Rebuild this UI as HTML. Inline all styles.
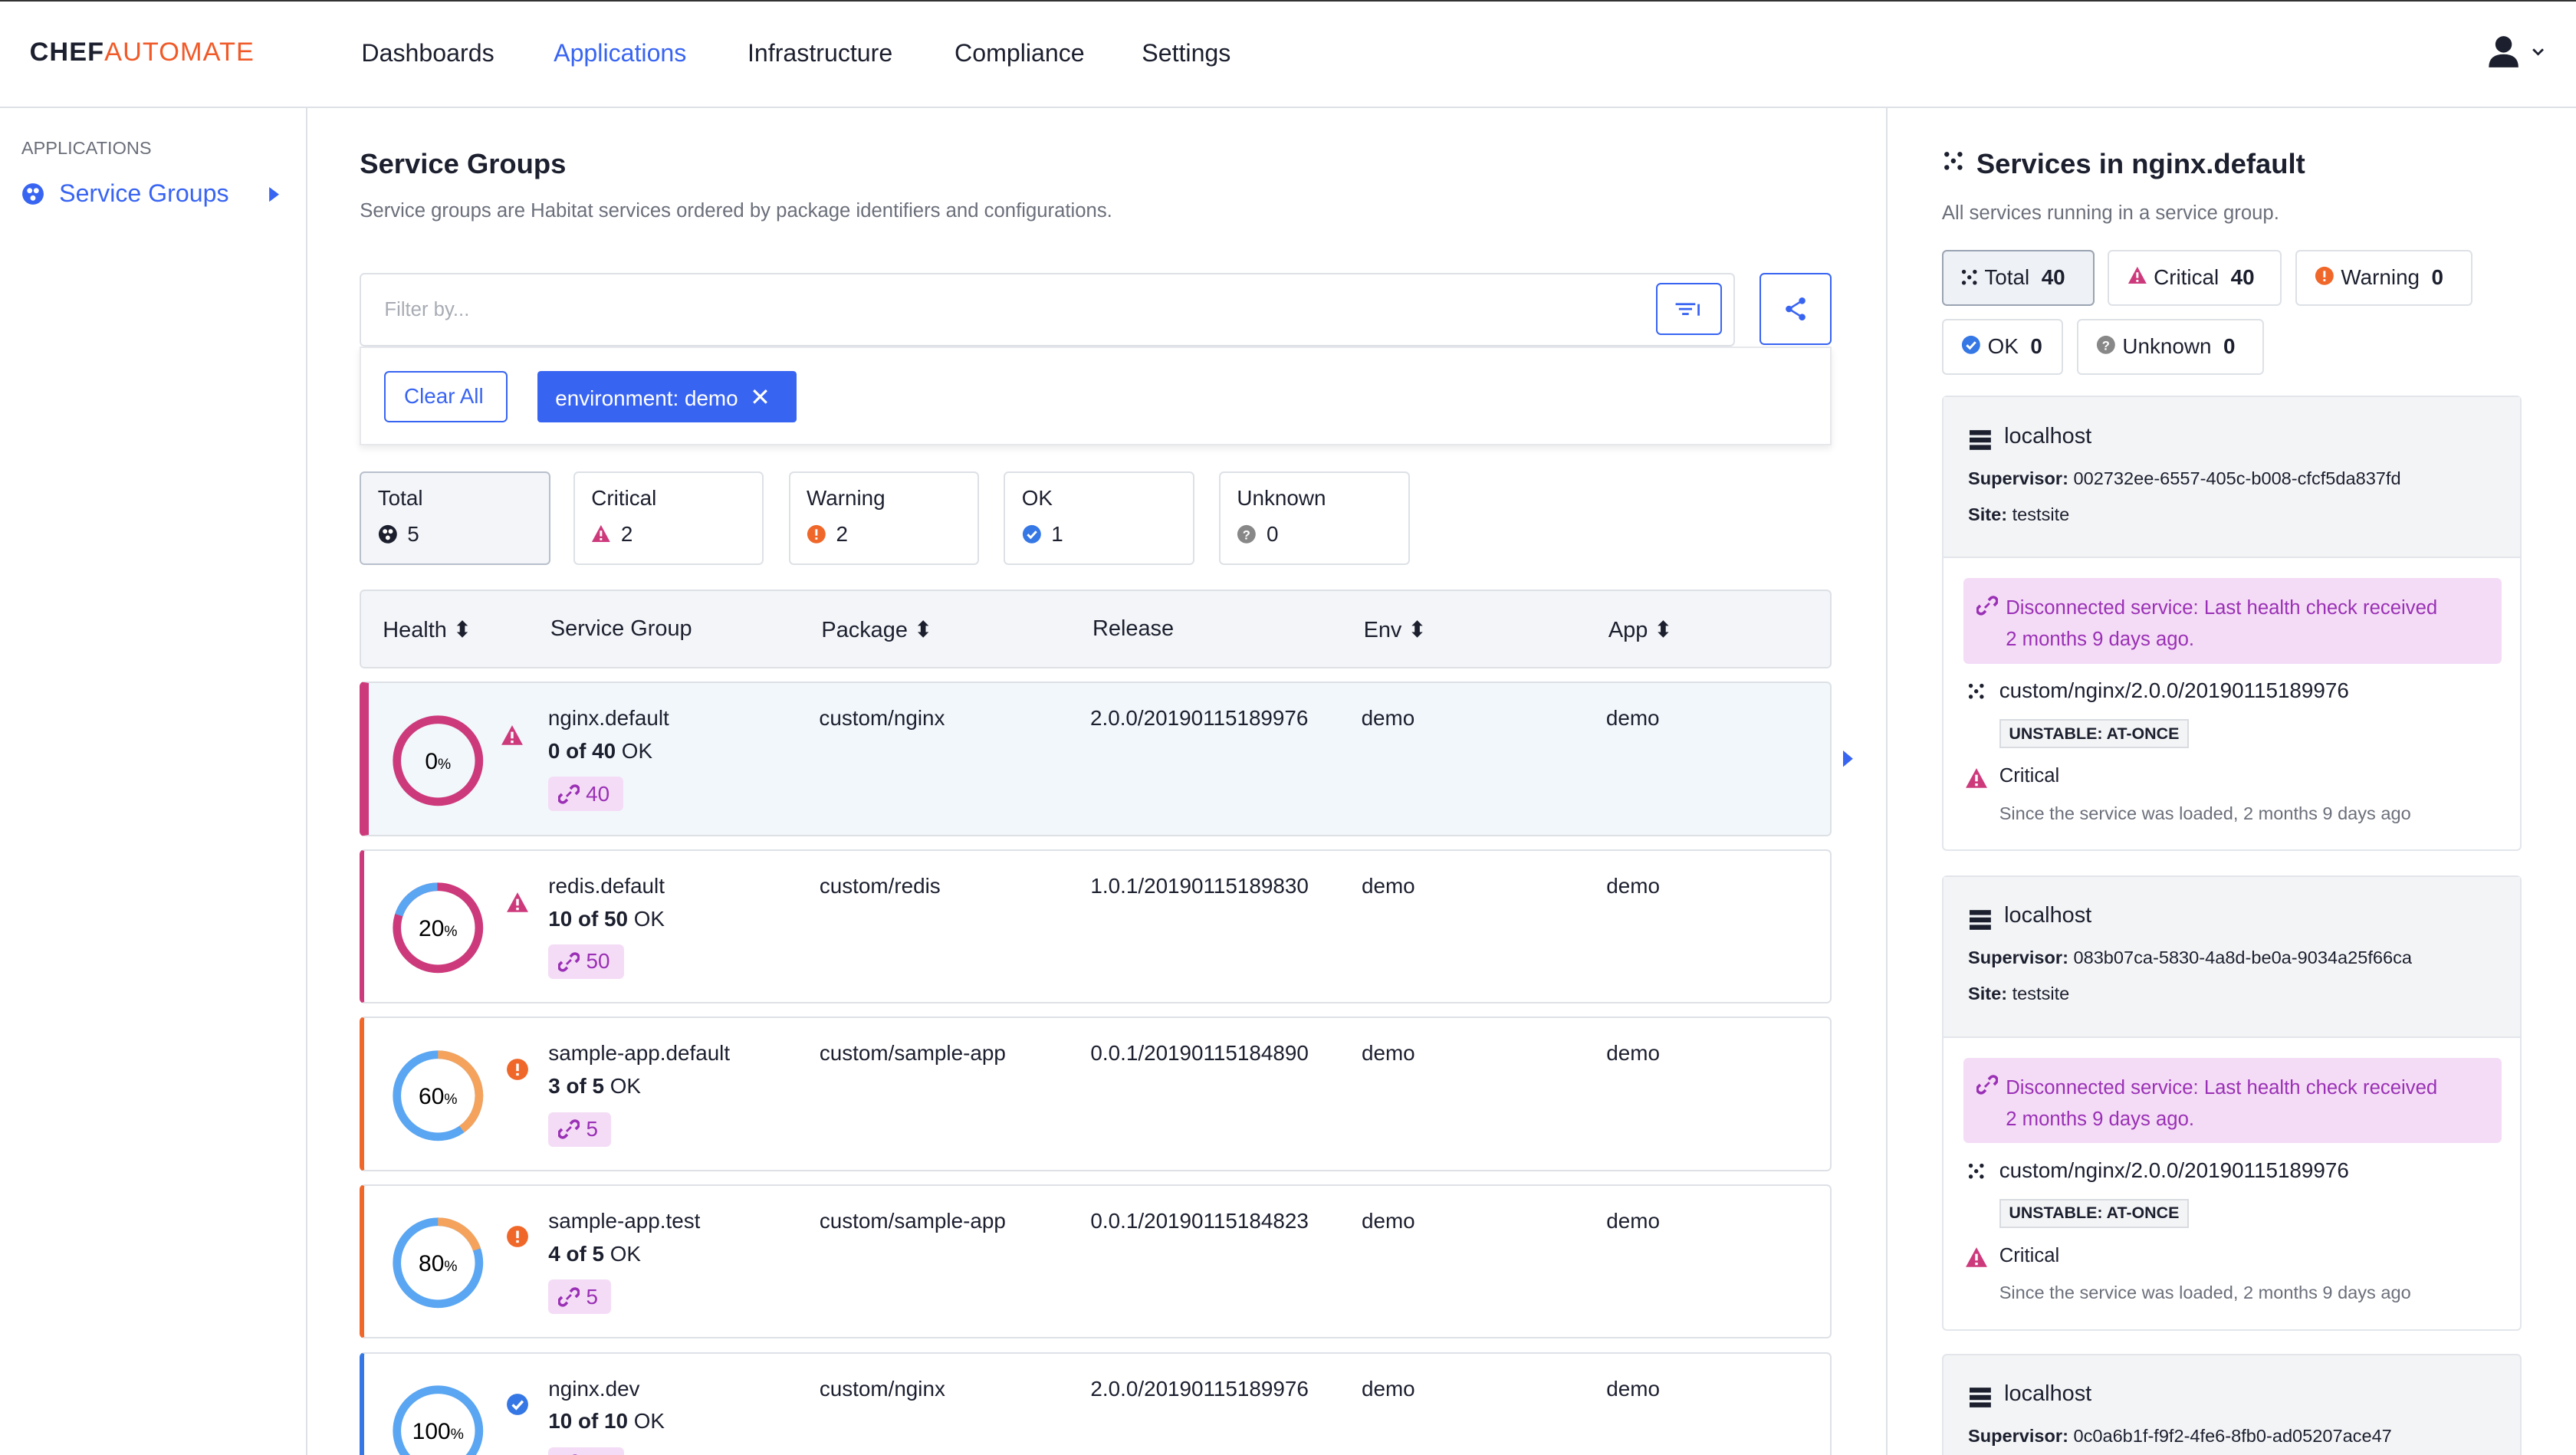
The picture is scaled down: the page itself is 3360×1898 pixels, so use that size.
<!DOCTYPE html>
<html><head><meta charset="utf-8"><style>
*{box-sizing:border-box;margin:0;padding:0}
html,body{width:3360px;height:1898px;overflow:hidden;background:#fff}
#w{zoom:2.142857;width:1568px;height:886px;position:relative;font-family:"Liberation Sans",sans-serif;color:#1c1f2e;font-size:13px;overflow:hidden}
.a{position:absolute}
.nav{font-size:15px;color:#1c1f2e;top:24px}
.sum{position:absolute;top:287px;width:116px;height:57px;border:1px solid #dde1e6;border-radius:3px;padding:8px 10px;font-size:13px}
.sum b{font-weight:normal;display:flex;align-items:center;gap:6px;margin-top:7px;font-size:13px}
.row{position:absolute;left:219px;width:896px;height:94px;border:1px solid #dde1e6;border-radius:3px;background:#fff}
.row .c{position:absolute;font-size:13px;top:14px}
.pill{position:absolute;left:115px;top:57px;background:#f4dcf6;color:#9a30b5;border-radius:3px;padding:2px 6px;font-size:13px;width:46px;height:21px;display:flex;align-items:center;gap:4px}
.rt{position:absolute;left:1182px;width:353px;border:1px solid #e2e5ea;border-radius:3px}
.chip{position:absolute;top:152px;height:34px;border:1px solid #dde1e6;border-radius:3px;padding:0 11px;font-size:13px;line-height:32px;white-space:nowrap}
.chip svg{vertical-align:-1px;margin-right:4px}
svg{display:inline-block}
</style></head><body><div id="w">
<svg width="0" height="0" style="position:absolute"><defs>
<g id="tri"><path d="M7 0.5L13.5 12.5H0.5z" fill="#cd3a7c"/><path d="M7 4.5v4M7 9.8v1.5" stroke="#fff" stroke-width="1.6"/></g>
<g id="wrn"><circle cx="7" cy="7" r="6.5" fill="#f0672a"/><path d="M7 3.5v4.5M7 9.3v1.5" stroke="#fff" stroke-width="1.6"/></g>
<g id="ok"><circle cx="7" cy="7" r="6.5" fill="#3577e5"/><path d="M4 7.2l2.2 2.2L10.2 5" stroke="#fff" stroke-width="1.6" fill="none"/></g>
<g id="unk"><circle cx="7" cy="7" r="6.5" fill="#888"/><text x="7" y="10.5" text-anchor="middle" font-size="9" font-weight="bold" fill="#fff" font-family="Liberation Sans">?</text></g>
<g id="tot"><circle cx="7" cy="7" r="6.5" fill="#1c1f2e"/><circle cx="5" cy="5" r="1.6" fill="#fff"/><circle cx="9" cy="5" r="1.6" fill="#fff"/><circle cx="7" cy="9.5" r="1.6" fill="#fff"/></g>
<g id="dots" fill="#1c1f2e"><circle cx="2" cy="2" r="1.5"/><circle cx="10" cy="2" r="1.5"/><circle cx="6" cy="6" r="1.5"/><circle cx="2" cy="10" r="1.5"/><circle cx="10" cy="10" r="1.5"/></g>
<g id="lnk" fill="none" stroke="#9a30b5" stroke-width="1.8"><path d="M8 3.5l1.5-1.5a2.5 2.5 0 0 1 3.5 3.5L11.5 7"/><path d="M6 10.5L4.5 12a2.5 2.5 0 0 1-3.5-3.5L2.5 7"/><path d="M8.5 5.5l-3 3" stroke-width="1.4"/></g>
<g id="srv" fill="#1c1f2e"><rect x="0" y="1" width="13" height="3"/><rect x="0" y="5.5" width="13" height="3"/><rect x="0" y="10" width="13" height="3"/></g>
</defs></svg>
<div class="a" style="left:0;top:0;width:1568px;height:1px;background:#333"></div>
<div class="a" style="left:0;top:65px;width:1568px;height:1px;background:#dde1e6"></div>
<div class="a" style="left:18px;top:23px;font-size:16px;font-weight:bold;letter-spacing:.5px">CHEF<span style="color:#f05a28;font-weight:normal">AUTOMATE</span></div>
<div class="a nav" style="left:220px">Dashboards</div>
<div class="a nav" style="left:337px;color:#3864f2">Applications</div>
<div class="a nav" style="left:455px">Infrastructure</div>
<div class="a nav" style="left:581px">Compliance</div>
<div class="a nav" style="left:695px">Settings</div>
<svg class="a" style="left:1513px;top:21px" width="40" height="22"><circle cx="11" cy="6" r="5" fill="#1c1f2e"/><path d="M2 20 Q2 12 11 12 Q20 12 20 20Z" fill="#1c1f2e"/><path d="M29 9l3 3 3-3" stroke="#1c1f2e" fill="none" stroke-width="1.3"/></svg>
<div class="a" style="left:186px;top:66px;width:1px;height:820px;background:#dde1e6"></div>
<div class="a" style="left:1148px;top:66px;width:1px;height:820px;background:#dde1e6"></div>
<div class="a" style="left:13px;top:84px;font-size:11px;color:#6b6f7a">APPLICATIONS</div>
<svg class="a" style="left:13px;top:111px" width="14" height="14"><circle cx="7" cy="7" r="6.5" fill="#3864f2"/><circle cx="5" cy="5" r="1.6" fill="#fff"/><circle cx="9" cy="5" r="1.6" fill="#fff"/><circle cx="7" cy="9.5" r="1.6" fill="#fff"/></svg>
<div class="a" style="left:36px;top:109px;font-size:15px;color:#3864f2">Service Groups</div>
<svg class="a" style="left:163px;top:114px" width="8" height="9"><path d="M1 0l6 4.5L1 9z" fill="#3864f2"/></svg>

<div class="a" style="left:219px;top:90px;font-size:17px;font-weight:bold">Service Groups</div>
<div class="a" style="left:219px;top:122px;font-size:12px;color:#6b6f7a">Service groups are Habitat services ordered by package identifiers and configurations.</div>
<div class="a" style="left:219px;top:166px;width:837px;height:45px;border:1px solid #dde1e6;border-radius:3px;background:#fff"></div>
<div class="a" style="left:234px;top:182px;font-size:12px;color:#a7abb3">Filter by...</div>
<div class="a" style="left:1008px;top:172px;width:40px;height:32px;border:1px solid #3864f2;border-radius:3px"><svg width="38" height="30"><path d="M11 12h12M13 15h8M15 18h4" stroke="#3864f2" stroke-width="1.3"/><path d="M25 12v7" stroke="#3864f2" stroke-width="1.3"/></svg></div>
<div class="a" style="left:1071px;top:166px;width:44px;height:44px;border:1px solid #3864f2;border-radius:3px"><svg width="42" height="42"><circle cx="25" cy="16" r="2" fill="#3864f2"/><circle cx="25" cy="26" r="2" fill="#3864f2"/><circle cx="17" cy="21" r="2" fill="#3864f2"/><path d="M25 16L17 21L25 26" stroke="#3864f2" fill="none" stroke-width="1.2"/></svg></div>
<div class="a" style="left:219px;top:211px;width:896px;height:60px;border:1px solid #e6e8ec;box-shadow:0 2px 4px rgba(0,0,0,.08);background:#fff"></div>
<div class="a" style="left:234px;top:226px;width:75px;height:31px;border:1px solid #3864f2;border-radius:3px;color:#3864f2;font-size:13px;padding:7px 11px">Clear All</div>
<div class="a" style="left:327px;top:226px;width:158px;height:31px;background:#3864f2;border-radius:2px;color:#fff;font-size:13px;padding:7px 11px">environment: demo &nbsp;<span style="font-size:15px">✕</span></div>

<div class="sum" style="left:219px;background:#f3f5f8;border-color:#b8c0cc">Total<b><svg width="12" height="12" viewBox="0 0 14 14"><use href="#tot"/></svg>5</b></div>
<div class="sum" style="left:349px">Critical<b><svg width="12" height="12" viewBox="0 0 14 14"><use href="#tri"/></svg>2</b></div>
<div class="sum" style="left:480px">Warning<b><svg width="12" height="12" viewBox="0 0 14 14"><use href="#wrn"/></svg>2</b></div>
<div class="sum" style="left:611px">OK<b><svg width="12" height="12" viewBox="0 0 14 14"><use href="#ok"/></svg>1</b></div>
<div class="sum" style="left:742px">Unknown<b><svg width="12" height="12" viewBox="0 0 14 14"><use href="#unk"/></svg>0</b></div>

<div class="a" style="left:219px;top:359px;width:896px;height:48px;background:#f3f5f8;border:1px solid #dde1e6;border-radius:3px"></div>
<div class="a" style="left:233px;top:375px;font-size:13.5px">Health ⬍</div>
<div class="a" style="left:335px;top:375px;font-size:13.5px">Service Group</div>
<div class="a" style="left:500px;top:375px;font-size:13.5px">Package ⬍</div>
<div class="a" style="left:665px;top:375px;font-size:13.5px">Release</div>
<div class="a" style="left:830px;top:375px;font-size:13.5px">Env ⬍</div>
<div class="a" style="left:979px;top:375px;font-size:13.5px">App ⬍</div>

<div class="row" style="top:415px;background:#f2f7fb;border-left:6px solid #cd3a7c">
<svg class="a" style="left:12px;top:17px" width="60" height="60"><circle cx="30" cy="30" r="25" fill="none" stroke="#cd3a7c" stroke-width="5"/><text x="30" y="35" text-anchor="middle" font-size="14" font-family="Liberation Sans">0<tspan font-size="9">%</tspan></text></svg>
<svg class="a" style="left:80px;top:25px" width="14" height="14"><use href="#tri"/></svg>
<div class="c" style="left:109px">nginx.default</div><div class="c" style="left:109px;top:34px"><b>0 of 40</b> OK</div>
<div class="pill" style="left:109px"><svg width="13" height="13" viewBox="0 0 14 14"><use href="#lnk"/></svg>40</div>
<div class="c" style="left:274px">custom/nginx</div><div class="c" style="left:439px">2.0.0/20190115189976</div><div class="c" style="left:604px">demo</div><div class="c" style="left:753px">demo</div>
</div>
<svg class="a" style="left:1122px;top:457px" width="7" height="10"><path d="M0 0l6 5-6 5z" fill="#3864f2"/></svg>

<div class="row" style="top:517px;border-left:3px solid #cd3a7c">
<svg class="a" style="left:15px;top:17px" width="60" height="60"><circle cx="30" cy="30" r="25" fill="none" stroke="#cd3a7c" stroke-width="5"/><circle cx="30" cy="30" r="25" fill="none" stroke="#5aa6f2" stroke-width="5" stroke-dasharray="31 200" transform="rotate(-162 30 30)"/><text x="30" y="35" text-anchor="middle" font-size="14" font-family="Liberation Sans">20<tspan font-size="9">%</tspan></text></svg>
<svg class="a" style="left:86px;top:25px" width="14" height="14"><use href="#tri"/></svg>
<div class="c" style="left:112px">redis.default</div><div class="c" style="left:112px;top:34px"><b>10 of 50</b> OK</div>
<div class="pill" style="left:112px"><svg width="13" height="13" viewBox="0 0 14 14"><use href="#lnk"/></svg>50</div>
<div class="c" style="left:277px">custom/redis</div><div class="c" style="left:442px">1.0.1/20190115189830</div><div class="c" style="left:607px">demo</div><div class="c" style="left:756px">demo</div>
</div>

<div class="row" style="top:619px;border-left:3px solid #f0672a">
<svg class="a" style="left:15px;top:17px" width="60" height="60"><circle cx="30" cy="30" r="25" fill="none" stroke="#5aa6f2" stroke-width="5"/><circle cx="30" cy="30" r="25" fill="none" stroke="#f5a35c" stroke-width="5" stroke-dasharray="63 200" transform="rotate(-90 30 30)"/><text x="30" y="35" text-anchor="middle" font-size="14" font-family="Liberation Sans">60<tspan font-size="9">%</tspan></text></svg>
<svg class="a" style="left:86px;top:24px" width="14" height="14"><use href="#wrn"/></svg>
<div class="c" style="left:112px">sample-app.default</div><div class="c" style="left:112px;top:34px"><b>3 of 5</b> OK</div>
<div class="pill" style="left:112px;width:38px"><svg width="13" height="13" viewBox="0 0 14 14"><use href="#lnk"/></svg>5</div>
<div class="c" style="left:277px">custom/sample-app</div><div class="c" style="left:442px">0.0.1/20190115184890</div><div class="c" style="left:607px">demo</div><div class="c" style="left:756px">demo</div>
</div>

<div class="row" style="top:721px;border-left:3px solid #f0672a">
<svg class="a" style="left:15px;top:17px" width="60" height="60"><circle cx="30" cy="30" r="25" fill="none" stroke="#5aa6f2" stroke-width="5"/><circle cx="30" cy="30" r="25" fill="none" stroke="#f5a35c" stroke-width="5" stroke-dasharray="31 200" transform="rotate(-90 30 30)"/><text x="30" y="35" text-anchor="middle" font-size="14" font-family="Liberation Sans">80<tspan font-size="9">%</tspan></text></svg>
<svg class="a" style="left:86px;top:24px" width="14" height="14"><use href="#wrn"/></svg>
<div class="c" style="left:112px">sample-app.test</div><div class="c" style="left:112px;top:34px"><b>4 of 5</b> OK</div>
<div class="pill" style="left:112px;width:38px"><svg width="13" height="13" viewBox="0 0 14 14"><use href="#lnk"/></svg>5</div>
<div class="c" style="left:277px">custom/sample-app</div><div class="c" style="left:442px">0.0.1/20190115184823</div><div class="c" style="left:607px">demo</div><div class="c" style="left:756px">demo</div>
</div>

<div class="row" style="top:823px;border-left:3px solid #3577e5">
<svg class="a" style="left:15px;top:17px" width="60" height="60"><circle cx="30" cy="30" r="25" fill="none" stroke="#5aa6f2" stroke-width="5"/><text x="30" y="35" text-anchor="middle" font-size="14" font-family="Liberation Sans">100<tspan font-size="9">%</tspan></text></svg>
<svg class="a" style="left:86px;top:24px" width="14" height="14"><use href="#ok"/></svg>
<div class="c" style="left:112px">nginx.dev</div><div class="c" style="left:112px;top:34px"><b>10 of 10</b> OK</div>
<div class="pill" style="left:112px"><svg width="13" height="13" viewBox="0 0 14 14"><use href="#lnk"/></svg>10</div>
<div class="c" style="left:277px">custom/nginx</div><div class="c" style="left:442px">2.0.0/20190115189976</div><div class="c" style="left:607px">demo</div><div class="c" style="left:756px">demo</div>
</div>

<svg class="a" style="left:1183px;top:92px" width="12" height="12"><use href="#dots"/></svg>
<div class="a" style="left:1203px;top:90px;font-size:17px;font-weight:bold">Services in nginx.default</div>
<div class="a" style="left:1182px;top:123px;font-size:12px;color:#6b6f7a">All services running in a service group.</div>
<div class="chip" style="left:1182px;width:93px;background:#eef1f5;border-color:#9aa4b2"><svg width="10" height="10" viewBox="0 0 12 12"><use href="#dots"/></svg>Total &nbsp;<b>40</b></div>
<div class="chip" style="left:1283px;width:106px"><svg width="12" height="12" viewBox="0 0 14 14"><use href="#tri"/></svg>Critical &nbsp;<b>40</b></div>
<div class="chip" style="left:1397px;width:108px"><svg width="12" height="12" viewBox="0 0 14 14"><use href="#wrn"/></svg>Warning &nbsp;<b>0</b></div>
<div class="chip" style="left:1182px;top:194px;width:74px"><svg width="12" height="12" viewBox="0 0 14 14"><use href="#ok"/></svg>OK &nbsp;<b>0</b></div>
<div class="chip" style="left:1264px;top:194px;width:114px"><svg width="12" height="12" viewBox="0 0 14 14"><use href="#unk"/></svg>Unknown &nbsp;<b>0</b></div>

<div class="rt" style="top:241px;height:277px">
<div class="a" style="left:0;top:0;width:351px;height:98px;background:#f3f4f6;border-bottom:1px solid #e2e5ea"></div>
<svg class="a" style="left:16px;top:19px" width="13" height="13"><use href="#srv"/></svg>
<div class="a" style="left:37px;top:16px;font-size:13.5px">localhost</div>
<div class="a" style="left:15px;top:43px;font-size:11px"><b>Supervisor:</b> 002732ee-6557-405c-b008-cfcf5da837fd</div>
<div class="a" style="left:15px;top:65px;font-size:11px"><b>Site:</b> testsite</div>
<div class="a" style="left:12px;top:110px;width:328px;height:52px;background:#f4dcf6;border-radius:3px;color:#9a30b5;font-size:12px;padding:9px 8px 0 26px;line-height:19px">Disconnected service: Last health check received<br>2 months 9 days ago.</div>
<svg class="a" style="left:20px;top:120px" width="13" height="13" viewBox="0 0 14 14"><use href="#lnk"/></svg>
<svg class="a" style="left:15px;top:174px" width="10" height="10" viewBox="0 0 12 12"><use href="#dots"/></svg>
<div class="a" style="left:34px;top:171px;font-size:13px">custom/nginx/2.0.0/20190115189976</div>
<div class="a" style="left:34px;top:196px;font-size:10px;font-weight:bold;background:#f3f4f6;border:1px solid #d8dbe0;padding:2px 5px">UNSTABLE: AT-ONCE</div>
<svg class="a" style="left:13px;top:225px" width="14" height="14"><use href="#tri"/></svg>
<div class="a" style="left:34px;top:224px;font-size:12px">Critical</div>
<div class="a" style="left:34px;top:247px;font-size:11px;color:#6b6f7a">Since the service was loaded, 2 months 9 days ago</div>
</div>

<div class="rt" style="top:533px;height:277px">
<div class="a" style="left:0;top:0;width:351px;height:98px;background:#f3f4f6;border-bottom:1px solid #e2e5ea"></div>
<svg class="a" style="left:16px;top:19px" width="13" height="13"><use href="#srv"/></svg>
<div class="a" style="left:37px;top:16px;font-size:13.5px">localhost</div>
<div class="a" style="left:15px;top:43px;font-size:11px"><b>Supervisor:</b> 083b07ca-5830-4a8d-be0a-9034a25f66ca</div>
<div class="a" style="left:15px;top:65px;font-size:11px"><b>Site:</b> testsite</div>
<div class="a" style="left:12px;top:110px;width:328px;height:52px;background:#f4dcf6;border-radius:3px;color:#9a30b5;font-size:12px;padding:9px 8px 0 26px;line-height:19px">Disconnected service: Last health check received<br>2 months 9 days ago.</div>
<svg class="a" style="left:20px;top:120px" width="13" height="13" viewBox="0 0 14 14"><use href="#lnk"/></svg>
<svg class="a" style="left:15px;top:174px" width="10" height="10" viewBox="0 0 12 12"><use href="#dots"/></svg>
<div class="a" style="left:34px;top:171px;font-size:13px">custom/nginx/2.0.0/20190115189976</div>
<div class="a" style="left:34px;top:196px;font-size:10px;font-weight:bold;background:#f3f4f6;border:1px solid #d8dbe0;padding:2px 5px">UNSTABLE: AT-ONCE</div>
<svg class="a" style="left:13px;top:225px" width="14" height="14"><use href="#tri"/></svg>
<div class="a" style="left:34px;top:224px;font-size:12px">Critical</div>
<div class="a" style="left:34px;top:247px;font-size:11px;color:#6b6f7a">Since the service was loaded, 2 months 9 days ago</div>
</div>

<div class="rt" style="top:824px;height:80px;background:#f3f4f6">
<svg class="a" style="left:16px;top:19px" width="13" height="13"><use href="#srv"/></svg>
<div class="a" style="left:37px;top:16px;font-size:13.5px">localhost</div>
<div class="a" style="left:15px;top:43px;font-size:11px"><b>Supervisor:</b> 0c0a6b1f-f9f2-4fe6-8fb0-ad05207ace47</div>
</div>
</div></body></html>
